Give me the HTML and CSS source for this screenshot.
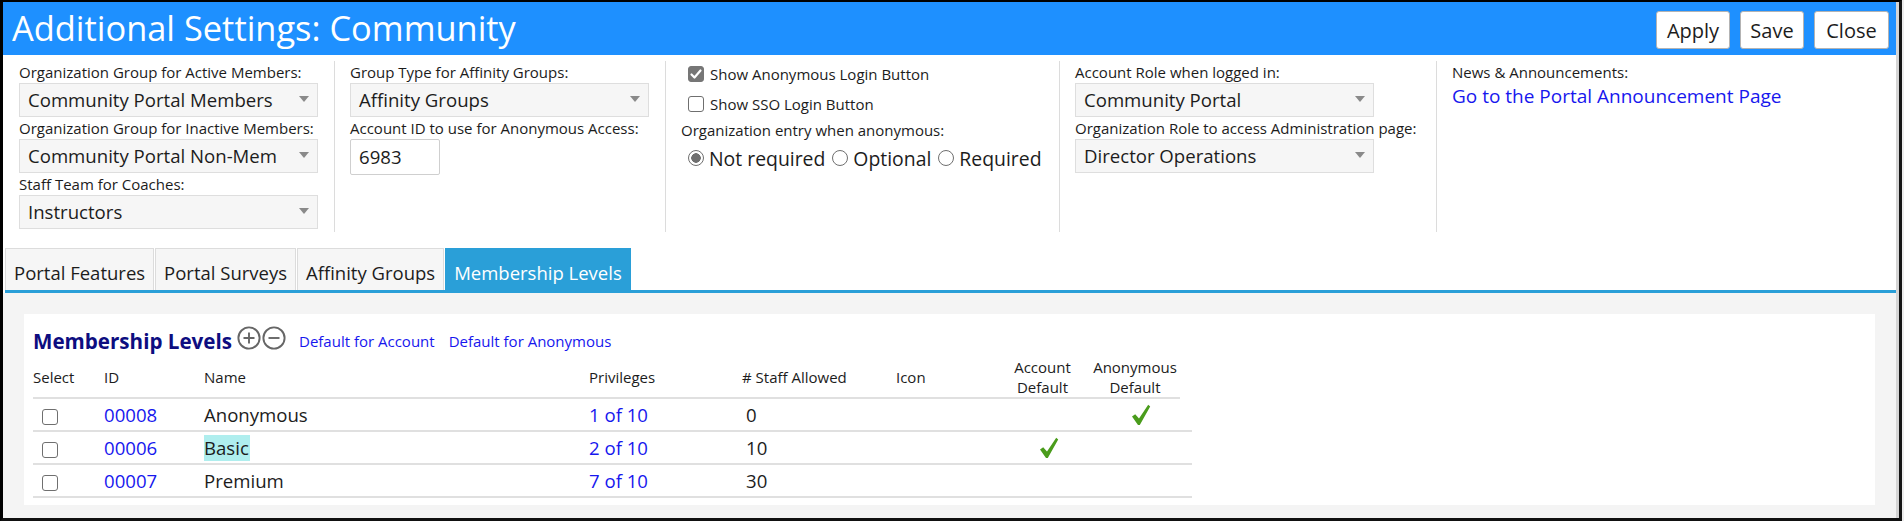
FILE: index.html
```html
<!DOCTYPE html>
<html lang="en">
<head>
<meta charset="utf-8">
<title>Additional Settings: Community</title>
<link rel="stylesheet" href="styles.css">
</head>
<body>
<div class="window">
  <div class="frame">
    <header class="titlebar">
      <h1 class="title">Additional Settings: Community</h1>
      <div class="actions">
        <button class="btn btn-apply">Apply</button>
        <button class="btn btn-save">Save</button>
        <button class="btn btn-close">Close</button>
      </div>
    </header>

    <section class="settings">
      <div class="col col-1">
        <div class="field-label">Organization Group for Active Members:</div>
        <div class="select">Community Portal Members<span class="caret"></span></div>
        <div class="field-label">Organization Group for Inactive Members:</div>
        <div class="select">Community Portal Non-Mem<span class="caret"></span></div>
        <div class="field-label">Staff Team for Coaches:</div>
        <div class="select">Instructors<span class="caret"></span></div>
      </div>
      <div class="col col-2">
        <div class="field-label">Group Type for Affinity Groups:</div>
        <div class="select">Affinity Groups<span class="caret"></span></div>
        <div class="field-label">Account ID to use for Anonymous Access:</div>
        <div class="textbox">6983</div>
      </div>
      <div class="col col-3">
        <div class="check-row"><span class="checkbox checked"><svg viewBox="0 0 16 16" width="16" height="16"><path d="M3.5 8.5 L6.5 11.5 L12.5 4.5" fill="none" stroke="#fff" stroke-width="2.2" stroke-linecap="round" stroke-linejoin="round"/></svg></span>Show Anonymous Login Button</div>
        <div class="check-row second"><span class="checkbox"></span>Show SSO Login Button</div>
        <div class="field-label entry-label">Organization entry when anonymous:</div>
        <div class="radio-row">
          <span class="radio checked"></span><span class="radio-text">Not required</span>
          <span class="radio"></span><span class="radio-text">Optional</span>
          <span class="radio"></span><span class="radio-text">Required</span>
        </div>
      </div>
      <div class="col col-4">
        <div class="field-label">Account Role when logged in:</div>
        <div class="select">Community Portal<span class="caret"></span></div>
        <div class="field-label">Organization Role to access Administration page:</div>
        <div class="select">Director Operations<span class="caret"></span></div>
      </div>
      <div class="col col-5">
        <div class="field-label">News &amp; Announcements:</div>
        <a class="news-link" href="#">Go to the Portal Announcement Page</a>
      </div>
    </section>

    <nav class="tabbar">
      <div class="tab">Portal Features</div>
      <div class="tab">Portal Surveys</div>
      <div class="tab">Affinity Groups</div>
      <div class="tab active">Membership Levels</div>
    </nav>

    <main class="content">
      <div class="panel">
        <div class="panel-head">
          <h2 class="panel-title">Membership Levels</h2>
          <span class="icon-btn"><svg viewBox="0 0 24 24" width="24" height="24"><circle cx="12" cy="12" r="10.6" fill="none" stroke="#666" stroke-width="1.9"/><path d="M6.5 12 H17.5 M12 6.5 V17.5" stroke="#666" stroke-width="1.9"/></svg></span>
          <span class="icon-btn"><svg viewBox="0 0 24 24" width="24" height="24"><circle cx="12" cy="12" r="10.6" fill="none" stroke="#666" stroke-width="1.9"/><path d="M6.5 12 H17.5" stroke="#666" stroke-width="1.9"/></svg></span>
          <a class="head-link first" href="#">Default for Account</a>
          <a class="head-link" href="#">Default for Anonymous</a>
        </div>
        <table class="levels">
          <colgroup>
            <col class="c-select"><col class="c-id"><col class="c-name"><col class="c-priv"><col class="c-staff"><col class="c-icon"><col class="c-acc"><col class="c-anon"><col class="c-pad">
          </colgroup>
          <thead>
            <tr>
              <th>Select</th><th>ID</th><th>Name</th><th>Privileges</th><th># Staff Allowed</th><th>Icon</th>
              <th class="center">Account<br>Default</th><th class="center">Anonymous<br>Default</th><th class="pad"></th>
            </tr>
          </thead>
          <tbody>
            <tr>
              <td><span class="checkbox row-check"></span></td>
              <td><a href="#">00008</a></td>
              <td>Anonymous</td>
              <td><a href="#">1 of 10</a></td>
              <td class="staff">0</td>
              <td></td>
              <td class="center"></td>
              <td class="center"><svg class="tick" viewBox="0 0 20 22" width="20" height="22"><path d="M1 12.5 L4.2 10.2 L8 14.6 L17.2 0.8 L19.2 2.4 L8.8 21 L7 21 Z" fill="#4a9c1c"/></svg></td>
              <td></td>
            </tr>
            <tr>
              <td><span class="checkbox row-check"></span></td>
              <td><a href="#">00006</a></td>
              <td><span class="hl">Basic</span></td>
              <td><a href="#">2 of 10</a></td>
              <td class="staff">10</td>
              <td></td>
              <td class="center"><svg class="tick" viewBox="0 0 20 22" width="20" height="22"><path d="M1 12.5 L4.2 10.2 L8 14.6 L17.2 0.8 L19.2 2.4 L8.8 21 L7 21 Z" fill="#4a9c1c"/></svg></td>
              <td class="center"></td>
              <td></td>
            </tr>
            <tr>
              <td><span class="checkbox row-check"></span></td>
              <td><a href="#">00007</a></td>
              <td>Premium</td>
              <td><a href="#">7 of 10</a></td>
              <td class="staff">30</td>
              <td></td>
              <td class="center"></td>
              <td class="center"></td>
              <td></td>
            </tr>
          </tbody>
        </table>
      </div>
    </main>
  </div>
</div>
</body>
</html>
```

FILE: styles.css
```css
* { box-sizing: border-box; }
html, body { margin: 0; padding: 0; }
body {
  width: 1904px;
  height: 521px;
  overflow: hidden;
  background: #ececec;
  font-family: "Open Sans", "Noto Sans", "Liberation Sans", sans-serif;
  color: #1c1c1c;
}
a { color: #1717ee; text-decoration: none; }

.window {
  width: 1902px;
  height: 521px;
  border-top: 2px solid #000;
  border-left: 3px solid #000;
  border-right: 3px solid #151515;
  border-bottom: 3px solid #111;
  display: flex;
}
.frame {
  flex: 1;
  display: flex;
  flex-direction: column;
  background: #fff;
  border-right: 3px solid #d5d5d5;
  min-width: 0;
}

/* title bar */
.titlebar {
  height: 53px;
  flex: none;
  background: #1e90ff;
  display: flex;
  align-items: center;
  justify-content: space-between;
  padding: 0 7px 0 9px;
}
.title {
  margin: 0;
  font-size: 34.4px;
  font-weight: 400;
  line-height: 40px;
  color: #fff;
  padding-bottom: 2px;
}
.actions { display: flex; gap: 10px; padding-top: 3px; }
.btn {
  height: 38px;
  padding: 0;
  background: #fff;
  border: 1px solid #b3b3b3;
  border-radius: 3px;
  font-family: inherit;
  font-size: 20px;
  color: #1c1c1c;
}
.btn-apply { width: 74px; }
.btn-save { width: 64px; }
.btn-close { width: 75px; }

/* settings */
.settings {
  height: 193px;
  flex: none;
  display: flex;
  padding-top: 6px;
}
.col {
  height: 171px;
  border-right: 1px solid #dcdcdc;
  padding: 1px 0 0 15px;
}
.col-1 { width: 332px; padding-left: 16px; }
.col-2 { width: 331px; }
.col-3 { width: 394px; }
.col-4 { width: 377px; }
.col-5 { flex: 1; border-right: none; }

.field-label {
  font-size: 15px;
  line-height: 20px;
  height: 20px;
  white-space: nowrap;
  color: #1c1c1c;
}
.select {
  position: relative;
  width: 299px;
  height: 34px;
  margin: 1px 0;
  background: #f6f6f6;
  border: 1px solid #dedede;
  font-size: 18.6px;
  line-height: 32px;
  padding-left: 8px;
  white-space: nowrap;
  overflow: hidden;
}
.caret {
  position: absolute;
  right: 8px;
  top: 12px;
  width: 0;
  height: 0;
  border-left: 5px solid transparent;
  border-right: 5px solid transparent;
  border-top: 6px solid #8a8a8a;
}
.textbox {
  width: 90px;
  height: 36px;
  margin-top: 1px;
  border: 1px solid #cfcfcf;
  border-radius: 2px;
  background: #fff;
  font-size: 18.6px;
  line-height: 34px;
  padding-left: 8px;
}

.check-row {
  display: flex;
  align-items: center;
  height: 24px;
  font-size: 15px;
  padding-left: 7px;
  white-space: nowrap;
}
.check-row.second { margin-top: 6px; }
.checkbox {
  display: inline-flex;
  width: 16px;
  height: 16px;
  border: 1px solid #6f6f6f;
  border-radius: 3px;
  background: #fff;
  margin-right: 6px;
  flex: none;
}
.checkbox.checked { background: #767676; border-color: #767676; }
.checkbox svg { margin: -1px; }
.entry-label { margin-top: 4px; }
.radio-row {
  display: flex;
  align-items: center;
  height: 26px;
  margin-top: 5px;
  padding-left: 7px;
  white-space: nowrap;
}
.radio {
  width: 16px;
  height: 16px;
  border: 1px solid #6f6f6f;
  border-radius: 50%;
  background: #fff;
  margin-right: 5px;
  flex: none;
}
.radio.checked {
  background: radial-gradient(circle, #6f6f6f 0 4.5px, #fff 5px);
}
.radio-text { font-size: 19.4px; margin-right: 7px; }

.news-link {
  display: block;
  margin-top: 2px;
  font-size: 19px;
  line-height: 24px;
  white-space: nowrap;
}

/* tabs */
.tabbar {
  flex: none;
  display: flex;
  gap: 1px;
  margin: 0 0 0 2px;
  border-bottom: 3px solid #2a9fd8;
}
.tab {
  height: 42px;
  padding: 12px 8px 0;
  font-size: 18.5px;
  line-height: 24px;
  background: #f6f6f6;
  border: 1px solid #dcdcdc;
  border-bottom: none;
  color: #1c1c1c;
  white-space: nowrap;
}
.tab.active {
  background: #2a9fd8;
  border-color: #2a9fd8;
  color: #fff;
}

/* content */
.content {
  flex: 1;
  background: #f4f4f4;
  padding: 21px 21px 0 21px;
}
.panel {
  height: 191px;
  background: #fff;
  padding: 13px 9px 0;
}
.panel-head {
  display: flex;
  align-items: center;
  height: 28px;
}
.panel-title {
  margin: 0 5px 0 0;
  font-size: 20.6px;
  font-weight: 700;
  color: #0d0d80;
  line-height: 28px;
}
.icon-btn { display: inline-flex; width: 24px; height: 24px; margin-right: 1px; margin-top: -6px; }
.head-link { font-size: 15px; margin-left: 14px; }
.head-link.first { margin-left: 12px; }

.levels {
  border-collapse: collapse;
  table-layout: fixed;
  width: 1159px;
  margin-top: 1px;
}
.c-select { width: 71px; }
.c-id { width: 100px; }
.c-name { width: 385px; }
.c-priv { width: 153px; }
.c-staff { width: 154px; }
.c-icon { width: 99px; }
.c-acc { width: 95px; }
.c-anon { width: 90px; }
.c-pad { width: 12px; }
.levels th {
  font-size: 15px;
  font-weight: 400;
  line-height: 20px;
  text-align: left;
  padding: 1px 0 0;
  height: 42px;
  border-bottom: 2px solid #e0e0e0;
  color: #1c1c1c;
}
.levels th.pad { border-bottom: none; }
.levels th.center, .levels td.center { text-align: center; }
.levels td {
  font-size: 18.6px;
  height: 33px;
  padding: 0;
  border-bottom: 2px solid #e0e0e0;
  vertical-align: middle;
  white-space: nowrap;
}
.levels td.staff { padding-left: 4px; }
.levels td.center { padding-left: 12px; }
.row-check { vertical-align: middle; margin-left: 9px; }
.hl { background: #afeeee; display: inline-block; line-height: 26px; padding-right: 1px; }
.tick { display: inline-block; vertical-align: middle; margin-top: -4px; }
```
